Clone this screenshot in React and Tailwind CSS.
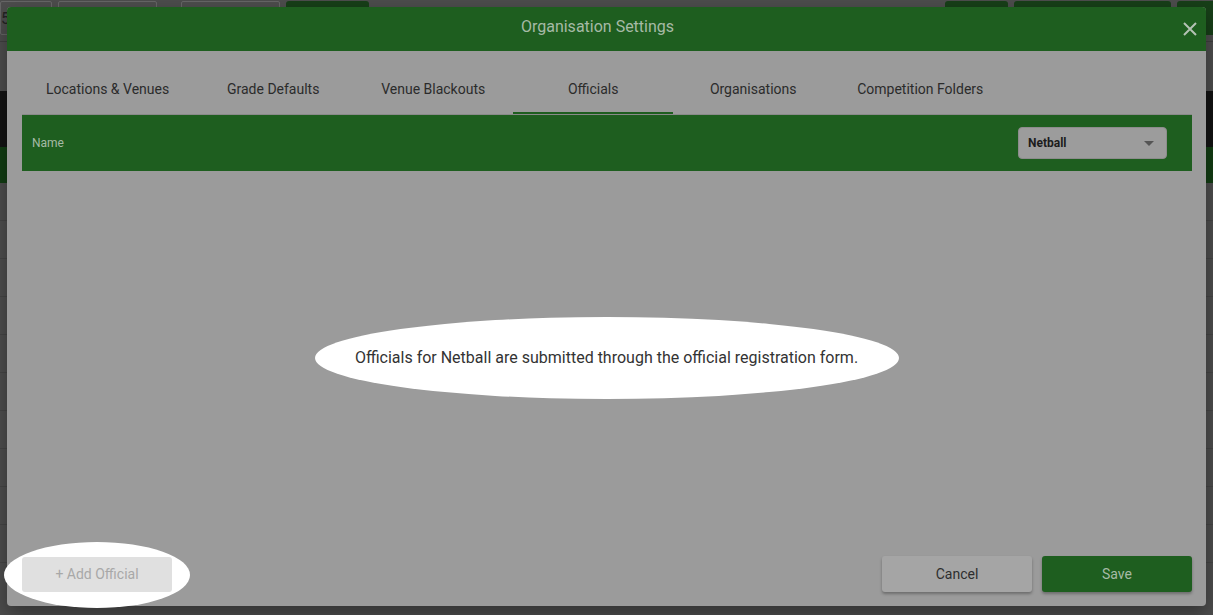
import React from 'react';

const tabs = [
  'Locations & Venues',
  'Grade Defaults',
  'Venue Blackouts',
  'Officials',
  'Organisations',
  'Competition Folders',
];

const BackgroundPage = () => (
  <div className="flex flex-col">
    <div className="h-[42px] flex items-start gap-[6px] pt-[1px] border-b border-[#3f3f3f] relative">
      <div className="w-[52px] h-[34px] border border-[#666] rounded-[2px] text-[16px] text-[#222] pl-0 pt-[9px] leading-none">5</div>
      <div className="w-[99px] h-[34px] border border-[#666] rounded-[2px]" />
      <div className="w-[99px] h-[34px] border border-[#666] rounded-[2px] ml-[18px]" />
      <div className="w-[83px] h-[34px] bg-[#173f18] rounded-[3px]" />
      <div className="flex-1" />
      <div className="w-[63px] h-[34px] bg-[#173f18] rounded-[3px]" />
      <div className="w-[157px] h-[34px] bg-[#173f18] rounded-[3px]" />
      <div className="w-[36px] h-[34px] bg-[#173f18] rounded-l-[3px] text-[#777] text-[13px] pt-[12px] leading-none">us</div>
    </div>
    <div className="h-[49px] bg-[#4d4d4d]" />
    <div className="h-[56px] bg-[#131313]" />
    <div className="h-[36px] bg-[#123d13]" />
    {[0, 1, 2, 3, 4, 5, 6, 7, 8, 9].map((i) => (
      <div key={i} className="h-[38px] border-b border-[#444] bg-[#4d4d4d]" />
    ))}
  </div>
);

export default function App() {
  return (
    <div
      className="relative w-[1213px] h-[615px] overflow-hidden bg-[#4d4d4d]"
      style={{ fontFamily: 'Roboto, "Liberation Sans", sans-serif' }}
    >
      <BackgroundPage />

      {/* dialog */}
      <div className="absolute left-[7px] top-[7px] w-[1199px] h-[599px] rounded-[4px] bg-[#9b9b9b] flex flex-col shadow-[0_8px_20px_rgba(0,0,0,0.35)]">
        <div className="h-[44px] shrink-0 bg-[#1e5e1f] rounded-t-[4px] flex items-center justify-center pr-[18px] pb-[4px] relative">
          <span className="text-[16px] text-[#a6baa6]">Organisation Settings</span>
          <svg
            className="absolute right-[9px] top-[15px] w-[14px] h-[14px]"
            viewBox="0 0 14 14"
            fill="none"
            stroke="#b4c2b4"
            strokeWidth="2"
          >
            <path d="M1 1L13 13M13 1L1 13" />
          </svg>
        </div>

        <div className="pl-[15px] pr-[14px] pt-[14px]">
          <div className="flex h-[50px] border-b border-[#8a8a8a]">
            {tabs.map((t) => (
              <div
                key={t}
                className={`min-w-[160px] px-6 flex items-center justify-center text-[14px] text-[#2b2b2b] ${
                  t === 'Officials' ? 'border-b-2 border-[#1e5e1f] pt-[2px]' : ''
                }`}
              >
                {t}
              </div>
            ))}
          </div>
          <div className="h-[56px] bg-[#1e5e1f] flex items-center justify-between pl-[10px] pr-[25px]">
            <span className="text-[12px] text-[#a6baa6]">Name</span>
            <div className="w-[149px] h-[32px] rounded-[4px] bg-[#9c9c9c] border border-[#8c8c8c] flex items-center justify-between pl-[9px] pr-[12px]">
              <span className="text-[12px] font-bold text-[#1c1c1c]">Netball</span>
              <svg className="w-[10px] h-[5px]" viewBox="0 0 10 5">
                <path d="M0 0L10 0L5 5Z" fill="#555" />
              </svg>
            </div>
          </div>
        </div>

        <div className="flex-1 flex items-center justify-center pb-[12px]">
          <div className="w-[584px] h-[82px] rounded-[50%] bg-white flex items-center justify-center">
            <span className="text-[16px] text-[#333]">
              Officials for Netball are submitted through the official registration form.
            </span>
          </div>
        </div>

        <div className="flex items-center justify-between pl-[15px] pr-[14px] pb-[14px]">
          <div className="relative">
            <div className="absolute -left-[18px] -right-[18px] -top-[15px] -bottom-[16px] rounded-[50%] bg-white" />
            <button className="relative w-[150px] h-[35px] rounded-[3px] bg-[#e0e0e0] text-[14px] text-[#a8a8a8]">
              + Add Official
            </button>
          </div>
          <div className="flex gap-[10px]">
            <button className="w-[150px] h-[36px] rounded-[3px] bg-[#a5a5a5] text-[14px] text-[#2e2e2e] shadow-[0_2px_3px_rgba(0,0,0,0.3)]">
              Cancel
            </button>
            <button className="w-[150px] h-[36px] rounded-[3px] bg-[#1e5e1f] text-[14px] text-[#a6baa6] shadow-[0_2px_3px_rgba(0,0,0,0.3)]">
              Save
            </button>
          </div>
        </div>
      </div>
    </div>
  );
}
